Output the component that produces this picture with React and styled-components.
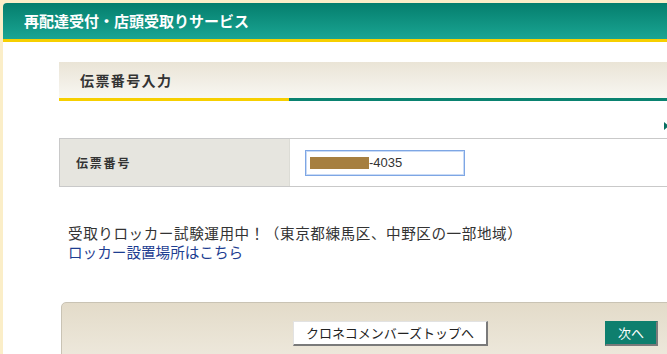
import React from 'react';
import styled, { createGlobalStyle } from 'styled-components';

const GlobalStyle = createGlobalStyle`
    html, body {
        margin: 0;
        padding: 0;
        background-color: #fbeec8;
        overflow: hidden;
    }
    body {
        font-family: "Noto Sans CJK JP", "Liberation Sans", sans-serif;
        color: #333;
    }
`

const Frame = styled.div`
    margin: 3px 0 0 3px;
    width: 780px;
    height: 360px;
    background-color: #fff;
    border-top-left-radius: 4px;
    overflow: hidden;
`
const Header = styled.div`
    height: 36px;
    background: linear-gradient(#057e6d, #1aa593);
    border-bottom: 3px solid #f6cf00;
    display: flex;
    align-items: center;
    padding-left: 21px;
    color: #fff;
    font-size: 15px;
    font-weight: bold;
    line-height: 18px;
`
const Content = styled.div`
    padding: 20px 0 0 56px;
`
const SectionTitle = styled.div`
    height: 36px;
    display: flex;
    align-items: center;
    padding-left: 21px;
    background: linear-gradient(#eae4d6, #f8f7f2);
    font-size: 14px;
    font-weight: bold;
    letter-spacing: 1.4px;
    color: #333;
`
const TitleBar = styled.div`
    height: 3px;
    display: flex;
`
const BarPart = styled.div`
    height: 100%;
    background-color: ${props => props.color};
    width: ${props => props.width ? props.width + 'px' : 'auto'};
    flex: ${props => props.width ? 'none' : '1'};
`
const ArrowRow = styled.div`
    height: 37px;
    display: flex;
    align-items: center;
    padding-left: 605px;
`
const Arrow = styled.span`
    width: 0;
    height: 0;
    border-top: 4px solid transparent;
    border-bottom: 4px solid transparent;
    border-left: 5px solid #0a6f62;
    margin-top: 12px;
`
const FormTable = styled.div`
    display: flex;
    height: 47px;
    border-top: 1px solid #c9c9c9;
    border-bottom: 1px solid #c9c9c9;
`
const LabelCell = styled.div`
    width: 213px;
    padding-left: 16px;
    display: flex;
    align-items: center;
    background-color: #e6e5df;
    border-left: 1px solid #c9c9c9;
    border-right: 1px solid #dcdcd6;
    font-size: 12px;
    font-weight: bold;
    letter-spacing: 1.8px;
    color: #333;
`
const ValueCell = styled.div`
    flex: 1;
    display: flex;
    align-items: center;
    padding-left: 15px;
`
const NumberInput = styled.div`
    width: 154px;
    height: 24px;
    border: 1px solid #7ea6e4;
    box-shadow: inset 0 0 0 1px #c9dbf6;
    display: flex;
    align-items: center;
    padding-left: 4px;
    font-family: "Liberation Sans", Arial, sans-serif;
    font-size: 13px;
    color: #333;
`
const Redacted = styled.span`
    display: inline-block;
    width: 59px;
    height: 12px;
    background-color: #a67f40;
`
const Notice = styled.div`
    margin: 36px 0 0 9px;
    font-size: 14.6px;
    line-height: 19px;
    color: #333;
`
const NoticeLine = styled.span`
    display: block;
    letter-spacing: 0.55px;
`
const NoticeLink = styled.a`
    display: block;
    color: #1d3d91;
    text-decoration: none;
`
const ButtonPanel = styled.div`
    margin: 41px 0 0 2px;
    height: 60px;
    border: 1px solid #c9c3b4;
    border-top-left-radius: 5px;
    background: linear-gradient(#e3dbc9, #f2eee4);
    display: flex;
    align-items: flex-start;
    padding: 18px 0 0 231px;
`
const Button = styled.button`
    height: 25px;
    padding: 0 ${props => props.pad}px;
    margin-right: ${props => props.gap}px;
    font-family: "Noto Sans CJK JP", sans-serif;
    font-size: 13px;
    line-height: 20px;
    background-color: ${props => props.primary ? '#0e7f6e' : '#fff'};
    color: ${props => props.primary ? '#fff' : '#222'};
    border: 1px solid ${props => props.primary ? '#0e7f6e' : '#e2e2e2'};
    border-right: 2px solid #7a7a7a;
    border-bottom: 2px solid #7a7a7a;
    cursor: pointer;
`

const App = () => {
    return (
        <>
            <GlobalStyle />
            <Frame>
                <Header>再配達受付・店頭受取りサービス</Header>
                <Content>
                    <SectionTitle>伝票番号入力</SectionTitle>
                    <TitleBar>
                        <BarPart color="#f6cf00" width={230} />
                        <BarPart color="#0a8270" />
                    </TitleBar>
                    <ArrowRow>
                        <Arrow />
                    </ArrowRow>
                    <FormTable>
                        <LabelCell>伝票番号</LabelCell>
                        <ValueCell>
                            <NumberInput>
                                <Redacted />
                                -4035
                            </NumberInput>
                        </ValueCell>
                    </FormTable>
                    <Notice>
                        <NoticeLine>受取りロッカー試験運用中！（東京都練馬区、中野区の一部地域）</NoticeLine>
                        <NoticeLink href="#">ロッカー設置場所はこちら</NoticeLink>
                    </Notice>
                    <ButtonPanel>
                        <Button pad={12} gap={117}>クロネコメンバーズトップへ</Button>
                        <Button primary pad={12} gap={0}>次へ</Button>
                    </ButtonPanel>
                </Content>
            </Frame>
        </>
    )
}

export default App
